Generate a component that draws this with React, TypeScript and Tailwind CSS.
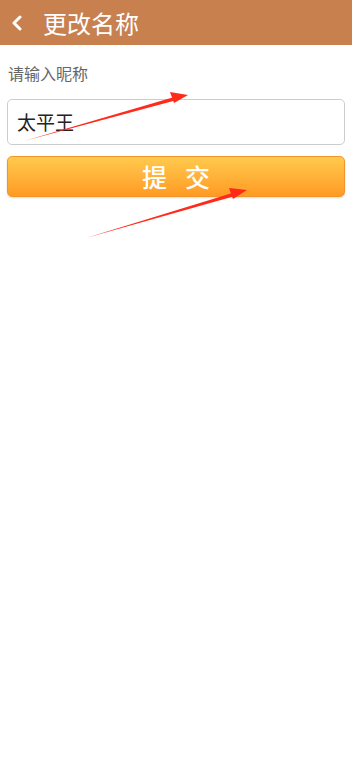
import React from 'react';

export default function App() {
  return (
    <div className="relative w-full min-h-[767px] bg-white" style={{ fontFamily: '"Noto Sans CJK SC", "Noto Sans", sans-serif' }}>
      {/* Header */}
      <header className="flex items-center h-[45px] bg-[#c8804f] text-white">
        <svg width="14" height="16" viewBox="0 0 14 16" className="ml-[10px]">
          <path d="M10 2 L4 8 L10 14" fill="none" stroke="white" strokeWidth="3" strokeLinecap="round" strokeLinejoin="round" />
        </svg>
        <h1 className="ml-[19px] text-[24px] leading-none">更改名称</h1>
      </header>

      {/* Form */}
      <div className="px-[7px]">
        <p className="mt-[17px] ml-[1px] text-[16px] leading-[22px] text-[#666]">请输入昵称</p>
        <div className="mt-[15px] h-[46px] flex items-center rounded-[5px] border border-[#ccc] px-[9px]">
          <span className="text-[19px] text-[#222]">太平王</span>
        </div>
        <button className="mt-[11px] w-full h-[41px] rounded-[5px] border border-[#f0962a] bg-gradient-to-b from-[#ffca4d] to-[#ff9a22] text-white text-[25px] font-medium tracking-[18px] pl-[18px] shadow-[0_1px_2px_rgba(0,0,0,0.15)]">
          提交
        </button>
      </div>

      {/* annotation arrows */}
      <svg className="absolute left-0 top-0 pointer-events-none" width="352" height="260">
        <polygon points="24,141 176,96.5 177,100" fill="#ff2a1a" />
        <polygon points="188,95 170,92 174,103" fill="#ff2a1a" />
        <polygon points="86,238 234,192.5 235,196" fill="#ff2a1a" />
        <polygon points="247,190 229,188 233,199" fill="#ff2a1a" />
      </svg>
    </div>
  );
}
